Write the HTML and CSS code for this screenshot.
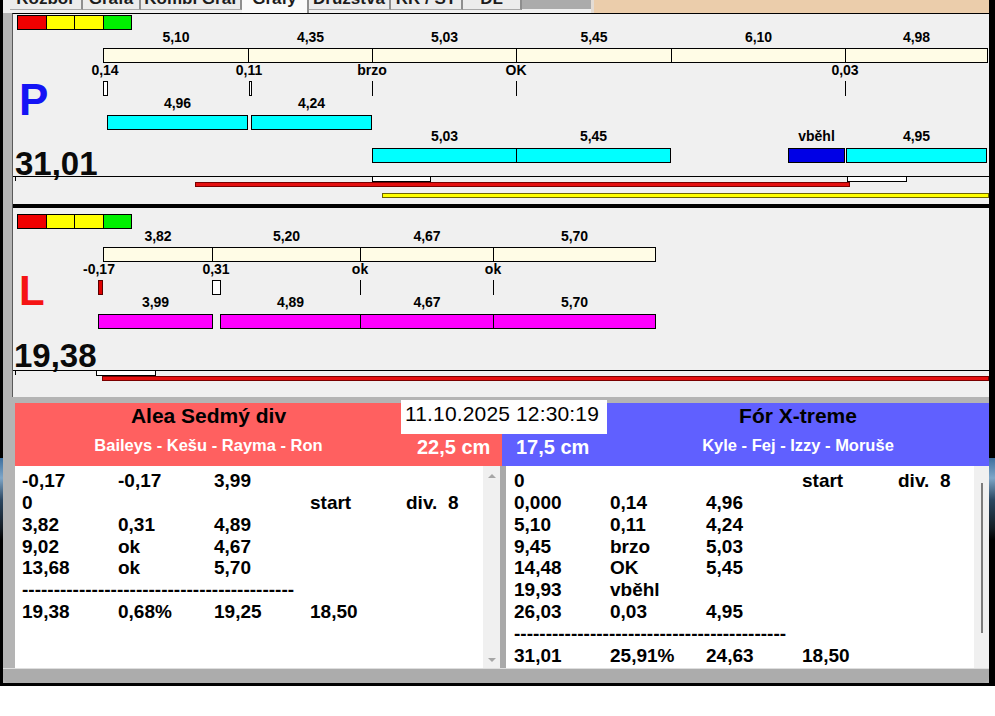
FILE: index.html
```html
<!DOCTYPE html>
<html lang="cs">
<head>
<meta charset="utf-8">
<title>Grafy</title>
<link rel="stylesheet" href="styles.css">
</head>
<body>
<div class="window">
  <div class="app">
    <div class="tabs">
      <div class="tab t1"><span>Rozbor</span></div>
      <div class="tab t2"><span>Grafa</span></div>
      <div class="tab t3"><span>Kombi Graf</span></div>
      <div class="tab t4 active"><span>Grafy</span></div>
      <div class="tab t5"><span>Družstva</span></div>
      <div class="tab t6"><span>RR / ST</span></div>
      <div class="tab t7"><span>DL</span></div>
      <div class="tab-gray"></div>
      <div class="tab-sep"></div>
      <div class="tab-rest"></div>
    </div>

    <div class="panels">
      <div class="chart chart-p">
        <div class="plot">
          <div class="legend"><span class="lg red"></span><span class="lg yellow"></span><span class="lg yellow"></span><span class="lg green"></span></div>
          <div class="side side-p">P</div>
          <div class="total total-p">31,01</div>

          <div class="bar b-top" style="left:90px;width:146px"></div>
          <div class="bar b-top" style="left:235px;width:125px"></div>
          <div class="bar b-top" style="left:359px;width:145px"></div>
          <div class="bar b-top" style="left:503px;width:156px"></div>
          <div class="bar b-top" style="left:658px;width:175px"></div>
          <div class="bar b-top" style="left:832px;width:143px"></div>
          <div class="lbl l-top" style="left:90px;width:146px">5,10</div>
          <div class="lbl l-top" style="left:235px;width:125px">4,35</div>
          <div class="lbl l-top" style="left:359px;width:145px">5,03</div>
          <div class="lbl l-top" style="left:503px;width:156px">5,45</div>
          <div class="lbl l-top" style="left:658px;width:175px">6,10</div>
          <div class="lbl l-top" style="left:832px;width:143px">4,98</div>

          <div class="lbl l-mark" style="left:52px;width:80px">0,14</div>
          <div class="lbl l-mark" style="left:196px;width:80px">0,11</div>
          <div class="lbl l-mark" style="left:319px;width:80px">brzo</div>
          <div class="lbl l-mark" style="left:463px;width:80px">OK</div>
          <div class="lbl l-mark" style="left:792px;width:80px">0,03</div>
          <div class="bar b-mark mk-white" style="left:90px;width:5px"></div>
          <div class="bar b-mark mk-white" style="left:236px;width:3px"></div>
          <div class="bar b-mark mk-line" style="left:359px"></div>
          <div class="bar b-mark mk-line" style="left:503px"></div>
          <div class="bar b-mark mk-line" style="left:832px"></div>

          <div class="lbl l-b1" style="left:94px;width:141px">4,96</div>
          <div class="lbl l-b1" style="left:238px;width:121px">4,24</div>
          <div class="bar b-b1 cyan" style="left:94px;width:141px"></div>
          <div class="bar b-b1 cyan" style="left:238px;width:121px"></div>

          <div class="lbl l-b2" style="left:359px;width:145px">5,03</div>
          <div class="lbl l-b2" style="left:503px;width:155px">5,45</div>
          <div class="lbl l-b2" style="left:775px;width:57px">vběhl</div>
          <div class="lbl l-b2" style="left:833px;width:141px">4,95</div>
          <div class="bar b-b2 cyan" style="left:359px;width:145px"></div>
          <div class="bar b-b2 cyan" style="left:503px;width:155px"></div>
          <div class="bar b-b2 blue" style="left:775px;width:57px"></div>
          <div class="bar b-b2 cyan" style="left:833px;width:141px"></div>
        </div>
        <div class="strip">
          <div class="baseline"></div>
          <div class="tick"></div>
          <div class="pos" style="left:359px;width:59px"></div>
          <div class="pos" style="left:834px;width:60px"></div>
          <div class="run red-run" style="left:182px;width:655px"></div>
          <div class="run yellow-run" style="left:369px;width:607px"></div>
        </div>
      </div>

      <div class="sep"></div>

      <div class="chart chart-l">
        <div class="plot">
          <div class="legend"><span class="lg red"></span><span class="lg yellow"></span><span class="lg yellow"></span><span class="lg green"></span></div>
          <div class="side side-l">L</div>
          <div class="total total-l">19,38</div>

          <div class="bar b-top" style="left:90px;width:110px"></div>
          <div class="bar b-top" style="left:199px;width:149px"></div>
          <div class="bar b-top" style="left:347px;width:134px"></div>
          <div class="bar b-top" style="left:480px;width:163px"></div>
          <div class="lbl l-top" style="left:90px;width:110px">3,82</div>
          <div class="lbl l-top" style="left:199px;width:149px">5,20</div>
          <div class="lbl l-top" style="left:347px;width:134px">4,67</div>
          <div class="lbl l-top" style="left:480px;width:163px">5,70</div>

          <div class="lbl l-mark" style="left:46px;width:80px">-0,17</div>
          <div class="lbl l-mark" style="left:163px;width:80px">0,31</div>
          <div class="lbl l-mark" style="left:307px;width:80px">ok</div>
          <div class="lbl l-mark" style="left:440px;width:80px">ok</div>
          <div class="bar b-mark mk-red" style="left:85px;width:5px"></div>
          <div class="bar b-mark mk-white" style="left:199px;width:9px"></div>
          <div class="bar b-mark mk-line" style="left:347px"></div>
          <div class="bar b-mark mk-line" style="left:480px"></div>

          <div class="lbl l-b1" style="left:85px;width:115px">3,99</div>
          <div class="lbl l-b1" style="left:207px;width:141px">4,89</div>
          <div class="lbl l-b1" style="left:347px;width:134px">4,67</div>
          <div class="lbl l-b1" style="left:480px;width:163px">5,70</div>
          <div class="bar b-b1 magenta" style="left:85px;width:115px"></div>
          <div class="bar b-b1 magenta" style="left:207px;width:141px"></div>
          <div class="bar b-b1 magenta" style="left:347px;width:134px"></div>
          <div class="bar b-b1 magenta" style="left:480px;width:163px"></div>
        </div>
        <div class="strip">
          <div class="baseline"></div>
          <div class="tick"></div>
          <div class="pos" style="left:83px;width:60px"></div>
          <div class="run red-run" style="left:89px;width:887px"></div>
        </div>
      </div>
    </div>

    <div class="bottom">
      <div class="date">11.10.2025 12:30:19</div>
      <div class="heads">
        <div class="team team-a">
          <div class="names">
            <div class="title">Alea Sedmý div</div>
            <div class="dogs">Baileys - Kešu - Rayma - Ron</div>
          </div>
          <div class="cm">22,5 cm</div>
        </div>
        <div class="team team-b">
          <div class="cm">17,5 cm</div>
          <div class="names">
            <div class="title">Fór X-treme</div>
            <div class="dogs">Kyle - Fej - Izzy - Moruše</div>
          </div>
        </div>
      </div>
      <div class="lists">
        <div class="list list-a">
          <div class="rows">
            <div class="row"><span>-0,17</span><span>-0,17</span><span>3,99</span></div>
            <div class="row"><span>0</span><span></span><span></span><span>start</span><span>div.  8</span></div>
            <div class="row"><span>3,82</span><span>0,31</span><span>4,89</span></div>
            <div class="row"><span>9,02</span><span>ok</span><span>4,67</span></div>
            <div class="row"><span>13,68</span><span>ok</span><span>5,70</span></div>
            <div class="dash">-------------------------------------------</div>
            <div class="row"><span>19,38</span><span>0,68%</span><span>19,25</span><span>18,50</span></div>
          </div>
          <div class="vscroll">
            <span class="arrow-up"></span>
            <span class="arrow-down"></span>
          </div>
        </div>
        <div class="gap"></div>
        <div class="list list-b">
          <div class="rows">
            <div class="row"><span>0</span><span></span><span></span><span>start</span><span>div.  8</span></div>
            <div class="row"><span>0,000</span><span>0,14</span><span>4,96</span></div>
            <div class="row"><span>5,10</span><span>0,11</span><span>4,24</span></div>
            <div class="row"><span>9,45</span><span>brzo</span><span>5,03</span></div>
            <div class="row"><span>14,48</span><span>OK</span><span>5,45</span></div>
            <div class="row"><span>19,93</span><span>vběhl</span></div>
            <div class="row"><span>26,03</span><span>0,03</span><span>4,95</span></div>
            <div class="dash">-------------------------------------------</div>
            <div class="row"><span>31,01</span><span>25,91%</span><span>24,63</span><span>18,50</span></div>
          </div>
          <div class="vscroll">
            <span class="thumb"></span>
          </div>
        </div>
      </div>
    </div>

    <div class="status"></div>
  </div>
</div>
</body>
</html>
```

FILE: styles.css
```css
html, body {
  margin: 0;
  padding: 0;
  background: #ffffff;
}

body {
  font-family: "Liberation Sans", Arial, sans-serif;
  color: #000;
}

.window {
  width: 995px;
  height: 686px;
  box-sizing: border-box;
  padding-left: 3px;
  background: linear-gradient(to bottom,
    #000 0, #000 458px,
    #3d6f9e 458px, #7ea6c8 478px, #2b4660 500px,
    #141c24 528px, #000 540px, #000 100%);
}

.app {
  width: 986px;
  height: 683px;
  background: #b4b4b4;
  display: flex;
  flex-direction: column;
}

/* ---------- tabs ---------- */
.tabs {
  height: 13px;
  display: flex;
  align-items: flex-start;
  background: #f0f0f0;
  padding-left: 7px;
  flex: none;
}

.tab {
  height: 10px;
  box-sizing: border-box;
  overflow: hidden;
  background: #ececec;
  border-right: 2px solid #8e8e8e;
  border-bottom: 1px solid #a8a8a8;
  text-align: center;
  font-size: 17px;
  line-height: 17px;
  font-weight: bold;
  color: #1c1c1c;
}

.tab span {
  display: block;
  margin-top: -10px;
  white-space: nowrap;
}

.tab.active {
  height: 13px;
  background: #fafafa;
  border-bottom: none;
}

.t1 { width: 73px; }
.t2 { width: 58px; }
.t3 { width: 101px; }
.t4 { width: 67px; }
.t5 { width: 82px; }
.t6 { width: 72px; }
.t7 { width: 59px; }

.tab-gray {
  width: 69px;
  height: 9px;
  background: #ababab;
}

.tab-sep {
  width: 3px;
  height: 13px;
  background: #e4dcd4;
}

.tab-rest {
  flex: 1;
  height: 13px;
  background: #ebcdab;
}

/* ---------- chart panels ---------- */
.panels {
  margin-left: 9px;
  width: 977px;
  box-sizing: border-box;
  border-left: 1px solid #5a5a5a;
  border-top: 1px solid #000;
  background: #f0f0f0;
  flex: none;
  display: flex;
  flex-direction: column;
}

.chart {
  display: flex;
  flex-direction: column;
  flex: none;
}

.chart-p { height: 190px; }
.chart-l { height: 189px; }

.sep {
  height: 4px;
  flex: none;
  background: #000;
}

.plot {
  position: relative;
  flex: none;
  height: 162px;
}

.chart-l .plot {
  margin-top: 5px;
  height: 157px;
}

.legend {
  display: flex;
  margin: 1px 0 0 4px;
}

.lg {
  width: 29px;
  height: 15px;
  box-sizing: border-box;
  border: 1px solid #000;
  margin-right: -1px;
}

.lg:nth-child(odd) { width: 30px; }

.lg.red { background: #f00000; }
.lg.yellow { background: #ffff00; }
.lg.green { background: #00f000; }

.side {
  position: absolute;
  font-weight: bold;
}

.side-p {
  left: 6px;
  top: 64px;
  font-size: 44px;
  line-height: 44px;
  color: #1414f5;
}

.side-l {
  left: 6px;
  top: 57px;
  font-size: 42px;
  line-height: 42px;
  color: #f51414;
}

.total {
  position: absolute;
  left: 2px;
  font-weight: bold;
  font-size: 33px;
  line-height: 33px;
  color: #0a0a0a;
}

.total-p { top: 133px; }
.total-l { top: 126px; left: 1px; }

.lbl {
  position: absolute;
  font-weight: bold;
  font-size: 14px;
  line-height: 16px;
  text-align: center;
  white-space: nowrap;
  color: #000;
}

.l-top { top: 15px; }
.l-mark { top: 48px; }
.l-b1 { top: 81px; }
.l-b2 { top: 114px; }

.bar {
  position: absolute;
  height: 15px;
  box-sizing: border-box;
  border: 1px solid #000;
}

.b-top { top: 34px; background: #fffce6; }
.b-mark { top: 67px; }
.b-b1 { top: 101px; }
.b-b2 { top: 134px; }

.cyan { background: #00ffff; }
.blue { background: #0000e6; }
.magenta { background: #ff00ff; }

.mk-white { background: #ffffff; }
.mk-red { background: #e00000; border-color: #5a0000; }
.mk-line {
  width: 1px;
  border: none;
  background: #000;
}

.strip {
  position: relative;
  flex: none;
  height: 28px;
}

.chart-l .strip { height: 27px; }

.baseline {
  position: absolute;
  left: 0;
  right: 0;
  top: 0;
  height: 1px;
  background: #000;
}

.tick {
  position: absolute;
  left: 2px;
  top: 1px;
  width: 1px;
  height: 4px;
  background: #000;
}

.pos {
  position: absolute;
  top: 0;
  height: 6px;
  box-sizing: border-box;
  border: 1px solid #000;
  background: #ffffff;
}

.run {
  position: absolute;
  height: 5px;
  box-sizing: border-box;
  border: 1px solid #7a0000;
}

.red-run {
  top: 6px;
  background: #e41010;
}

.yellow-run {
  top: 17px;
  background: #ffff00;
  border-color: #6e6400;
}

/* ---------- bottom section ---------- */
.bottom {
  position: relative;
  padding: 6px 0 0 12px;
  background: #b4b4b4;
  flex: none;
}

.date {
  position: absolute;
  left: 398px;
  top: 3px;
  width: 206px;
  height: 34px;
  box-sizing: border-box;
  padding: 2px 0 0 4px;
  background: #ffffff;
  font-size: 21px;
  line-height: 24px;
  letter-spacing: 0.15px;
  white-space: nowrap;
  color: #000;
}

.heads {
  display: flex;
  height: 63px;
}

.team {
  display: flex;
  width: 487px;
}

.team-a { background: #ff6060; }
.team-b { background: #6060ff; }

.names {
  text-align: center;
  padding-top: 1px;
}

.team-a .names { width: 387px; }
.team-b .names { width: 382px; }

.title {
  font-weight: bold;
  font-size: 21px;
  line-height: 24px;
  color: #000;
  white-space: nowrap;
}

.dogs {
  margin-top: 7px;
  font-weight: bold;
  font-size: 16.5px;
  line-height: 20px;
  color: #ffffff;
  white-space: nowrap;
}

.cm {
  box-sizing: border-box;
  padding-top: 32px;
  font-weight: bold;
  font-size: 20px;
  line-height: 24px;
  color: #ffffff;
  white-space: nowrap;
}

.team-a .cm { width: 100px; padding-left: 15px; }
.team-b .cm { width: 105px; padding-left: 14px; }

.lists {
  display: flex;
  height: 202px;
}

.list {
  display: flex;
  background: #ffffff;
  overflow: hidden;
}

.list-a { width: 485px; }
.list-b { width: 483px; }

.gap {
  width: 6px;
  background: #a9a9a9;
}

.rows {
  flex: 1;
  padding-top: 4px;
  overflow: hidden;
}

.list-a .rows { padding-left: 7px; }
.list-b .rows { padding-left: 8px; }

.row {
  display: grid;
  grid-template-columns: repeat(5, 96px);
  height: 21.85px;
  font-weight: bold;
  font-size: 19px;
  line-height: 21.85px;
  white-space: pre;
}

.dash {
  height: 21.85px;
  font-weight: bold;
  font-size: 19px;
  line-height: 21.85px;
  white-space: nowrap;
}

.vscroll {
  display: flex;
  flex-direction: column;
  background: #f0f0f0;
}

.list-a .vscroll {
  width: 17px;
  align-items: center;
  justify-content: space-between;
  padding: 8px 0 6px;
  box-sizing: border-box;
}

.list-b .vscroll {
  width: 15px;
}

.arrow-up {
  width: 0;
  height: 0;
  border-left: 4px solid transparent;
  border-right: 4px solid transparent;
  border-bottom: 4px solid #a6a6a6;
}

.arrow-down {
  width: 0;
  height: 0;
  border-left: 4px solid transparent;
  border-right: 4px solid transparent;
  border-top: 4px solid #a6a6a6;
}

.thumb {
  width: 2px;
  height: 150px;
  margin: 17px 0 0 7px;
  background: #7c7c7c;
}

.status {
  height: 15px;
  box-sizing: border-box;
  border-top: 1px solid #dedede;
  background: #acacac;
  border-radius: 0 0 7px 7px;
  flex: none;
}
```
